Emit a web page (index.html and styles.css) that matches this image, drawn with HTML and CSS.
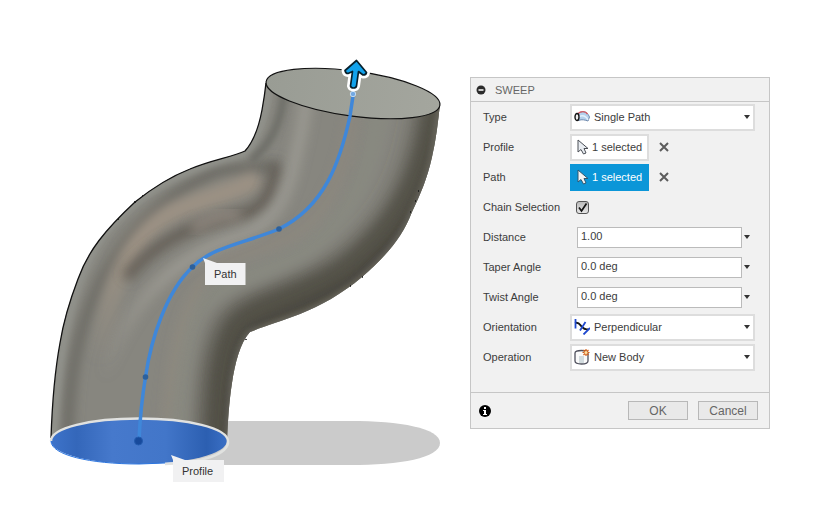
FILE: index.html
```html
<!DOCTYPE html>
<html lang="en">
<head>
<meta charset="utf-8">
<title>Sweep</title>
<link rel="stylesheet" href="styles.css">
</head>
<body>
<main class="workspace">
  <section class="viewport" aria-label="Model view">
    <svg class="scene" viewBox="0 0 470 532" role="img" aria-label="Swept pipe with its profile and path">
      <defs>
        <clipPath id="body-clip">
          <path d="M51 441C52 408 55 370 60 343C64 318 70 300 78 279C88 251 105 230 135 202C150 190 167 178 190 169C211 160 232 157 245 151C254 141 259 126 262 110C264 99 265 92 266 83L353 72L440 104C438 122 436 140 432 157C427 179 421 193 412 212C402 238 386 256 362 277C342 294 320 306 300 314C282 321 262 327 250 332C240 343 235 363 232 383C229 402 228 420 227 441Z"/>
        </clipPath>
        <filter id="blur3" x="-30%" y="-30%" width="160%" height="160%"><feGaussianBlur stdDeviation="3"/></filter>
        <filter id="blur6" x="-40%" y="-40%" width="180%" height="180%"><feGaussianBlur stdDeviation="6"/></filter>
        <filter id="blur12" x="-40%" y="-40%" width="180%" height="180%"><feGaussianBlur stdDeviation="12"/></filter>
        <linearGradient id="profile-fill" x1="50" x2="228" y1="0" y2="0" gradientUnits="userSpaceOnUse">
          <stop offset="0" stop-color="#3e74cb"/><stop offset=".15" stop-color="#3467ba"/><stop offset=".35" stop-color="#4679cc"/>
          <stop offset=".65" stop-color="#4276c9"/><stop offset=".88" stop-color="#2c5fb1"/><stop offset="1" stop-color="#3b70c6"/>
        </linearGradient>
        <linearGradient id="cap-fill" x1="0" x2="1"><stop offset="0" stop-color="#999c94"/><stop offset="1" stop-color="#a4a69e"/></linearGradient>
        <linearGradient id="warm-fade" x1="0" x2="0" y1="250" y2="360" gradientUnits="userSpaceOnUse"><stop offset="0" stop-color="#9d9284"/><stop offset="1" stop-color="#9d9284" stop-opacity="0"/></linearGradient>
        <linearGradient id="cool-fade" x1="0" x2="0" y1="270" y2="380" gradientUnits="userSpaceOnUse"><stop offset="0" stop-color="#a2a099"/><stop offset="1" stop-color="#a2a099" stop-opacity="0"/></linearGradient>
      </defs>

      <path class="shadow" d="M200 421H350C400 421 440 428 440 443S400 465 350 465H180Z"/>

      <g clip-path="url(#body-clip)">
        <rect width="470" height="532" fill="#87867f"/>
        <g class="shade">
          <path d="M448 80C440 180 410 235 355 276C310 306 262 314 246 328C230 347 226 380 224 470" stroke="#4b4841" stroke-width="48" filter="url(#blur12)"/>
          <path d="M436 80C430 165 404 215 346 266C310 294 260 304 237 324C222 350 218 400 216 470" stroke="#55524a" stroke-width="12" opacity=".8" filter="url(#blur6)"/>
          <path d="M381 70C378 170 352 215 307 249C265 276 219 278 197 310C182 340 177 390 176 470" stroke="#888980" stroke-width="18" filter="url(#blur6)"/>
          <path d="M67 470C67 380 76 332 101 281C130 228 167 193 217 172C240 166 256 172 279 164" stroke="#66655f" stroke-width="9" filter="url(#blur6)"/>
          <path d="M53 450C57 350 70 285 103 236C145 183 195 166 245 153C258 143 268 110 270 70" stroke="#949690" stroke-width="6" filter="url(#blur3)"/>
          <path d="M100 370C104 286 130 236 172 212C212 195 237 192 258 178" stroke="url(#warm-fade)" stroke-width="17" filter="url(#blur6)"/>
          <path d="M286 70C284 118 274 142 251 160" stroke="#656660" stroke-width="7" opacity=".8" filter="url(#blur3)"/>
          <path d="M126 278C142 258 160 243 189 230C218 216 251 218 263 202C273 190 272 180 277 166" stroke="#58514a" stroke-width="11" opacity=".8" filter="url(#blur6)"/>
          <path d="M192 229C207 219 230 212 241 217" stroke="#989087" stroke-width="11" opacity=".8" filter="url(#blur6)"/>
          <path d="M100 400C122 290 190 253 235 237C276 225 287 195 295 160C302 130 306 115 308 70" stroke="url(#cool-fade)" stroke-width="11" opacity=".8" filter="url(#blur6)"/>
          <path d="M163 470C169 350 183 300 214 266C245 248 300 246 322 208C343 176 352 140 357 70" stroke="#948c80" stroke-width="10" opacity=".5" filter="url(#blur6)"/>
          <path d="M441 104C438 122 436 140 433 157C428 179 422 193 413 212C403 238 387 256 363 278C343 295 321 307 301 315L251 333C241 344 236 363 233 383L228 450" stroke="#8f8d84" stroke-width="4" opacity=".7" filter="url(#blur3)"/>
        </g>
      </g>
      <path class="edge" d="M51 438C52 408 55 370 60 343C64 318 70 300 78 279C88 251 105 230 135 202C150 190 167 178 190 169C211 160 232 157 245 151C254 141 259 126 262 110C264 99 265 92 266 83"/>
      <path class="tick" d="M118 219h1M134 202h2M142 196h1M418 191h1M415 201h1M410 212h1M362 277h1M350 286h1M246 339v1"/>

      <ellipse cx="353" cy="93.5" rx="87.7" ry="22.5" transform="rotate(7.7 353 93.5)" fill="url(#cap-fill)" stroke="#111" stroke-width="1.2"/>

      <ellipse cx="139" cy="441" rx="88" ry="23" fill="url(#profile-fill)"/>
      <path d="M51 441C51 428 90 418.500 139 418.500S227 428 228 441S202 463 165 464" fill="none" stroke="#e1e2e0" stroke-width="2.500"/>
      <path d="M51 441C51 455 90 464 139 464L165 463" fill="none" stroke="#2b75df" stroke-width="1"/>

      <path class="path-line" d="M139 440C140 419 142 398 145.500 377C151 339 166 292 192.500 267C212 247 245 243 279 229C325 206 340 162 350 116L353 96"/>
      <g class="path-point"><circle cx="145.500" cy="377" r="2.800"/><circle cx="192.500" cy="267" r="2.800"/><circle cx="279" cy="229" r="2.800"/></g>
      <circle cx="138.500" cy="441" r="4" fill="#174a9c" stroke="#245caf"/>
      <circle cx="353" cy="94" r="2.700" fill="#74a9e3" stroke="#c5dbef"/>

      <g stroke-linejoin="round">
        <path d="M356.500 60.500L345 70.500Q345.500 73.500 348 73.500L352.500 71.500L350.500 86Q351 88 353.500 88Q356 88 356.500 86L358.500 71.500L363 75Q366 75 366.500 72.500Z" fill="#fff" stroke="#fff" stroke-width="7"/>
        <path d="M356.500 60.500L345 70.500Q345.500 73.500 348 73.500L352.500 71.500L350.500 86Q351 88 353.500 88Q356 88 356.500 86L358.500 71.500L363 75Q366 75 366.500 72.500Z" fill="#12a2eb" stroke="#07202c" stroke-width="1.700"/>
      </g>

      <g class="callout">
        <path d="M203 258L217 263H245.500V285H205V263Z"/><text x="214" y="278">Path</text>
        <path d="M171 455L185 460H224V482H173V460Z"/><text x="182" y="475">Profile</text>
      </g>
    </svg>
  </section>

  <form class="panel" aria-labelledby="panel-title">
    <header class="panel-header">
      <button type="button" class="icon-button" aria-label="Collapse">
        <svg width="10" height="10" viewBox="0 0 10 10"><circle cx="5" cy="5" r="4.500" fill="#2b2b2b"/><path d="M2.500 5h5" stroke="#fff" stroke-width="1.500"/></svg>
      </button>
      <h1 id="panel-title" class="panel-title">SWEEP</h1>
    </header>

    <div class="rows">
      <label class="row-label" for="type">Type</label>
      <div class="dropdown">
        <select id="type"><option>Single Path</option></select>
        <svg class="option-icon" width="16" height="16" viewBox="0 0 16 16">
          <path d="M4 5C7 1.500 13 1.500 15.500 8L14 12C11 11 8 10 4.500 11.500Z" fill="#b4d0ed" stroke="#6f89ad"/>
          <path d="M4 4.500C7 1.800 11.500 2 13.500 5" fill="none" stroke="#d65b63" stroke-width="1.400"/>
          <path d="M5 7.500C9 6 12 7 14 11" fill="none" stroke="#e4f1fb" stroke-width="1.500"/>
          <ellipse cx="3" cy="8" rx="2" ry="3.500" fill="#eee" stroke="#151515" stroke-width="1.400"/>
        </svg>
        <svg class="caret" width="6" height="4" viewBox="0 0 6 4"><path d="M0 0h6L3 4z"/></svg>
      </div>

      <span class="row-label">Profile</span>
      <div class="selection">
        <button type="button" class="pick">
          <svg width="12" height="16" viewBox="0 0 12 16"><path d="M1 1V13L4 10.500L6.500 15L9 14L7 9.500H11Z" fill="#e9edf2" stroke="#4a4e55"/></svg>
          1 selected
        </button>
        <button type="button" class="icon-button" aria-label="Clear profile"><svg width="10" height="10" viewBox="0 0 10 10"><path d="M1 1l8 8M9 1l-8 8" stroke="#5c5c5c" stroke-width="2"/></svg></button>
      </div>

      <span class="row-label">Path</span>
      <div class="selection">
        <button type="button" class="pick pick-active">
          <svg width="12" height="16" viewBox="0 0 12 16"><path d="M1 1V13L4 10.500L6.500 15L9 14L7 9.500H11Z" fill="#f4f4f4" stroke="#31566e"/></svg>
          1 selected
        </button>
        <button type="button" class="icon-button" aria-label="Clear path"><svg width="10" height="10" viewBox="0 0 10 10"><path d="M1 1l8 8M9 1l-8 8" stroke="#5c5c5c" stroke-width="2"/></svg></button>
      </div>

      <label class="row-label" for="chain">Chain Selection</label>
      <div class="check">
        <input id="chain" type="checkbox" checked>
        <svg class="check-mark" width="13" height="13" viewBox="0 0 13 13"><path d="M3 6.500L5.500 10L10.500 2.500" fill="none" stroke="#151515" stroke-width="1.700"/></svg>
      </div>

      <label class="row-label" for="distance">Distance</label>
      <div class="value">
        <input id="distance" type="text" value="1.00">
        <button type="button" class="icon-button" aria-label="Distance options"><svg class="caret" width="6" height="4" viewBox="0 0 6 4"><path d="M0 0h6L3 4z"/></svg></button>
      </div>

      <label class="row-label" for="taper">Taper Angle</label>
      <div class="value">
        <input id="taper" type="text" value="0.0 deg">
        <button type="button" class="icon-button" aria-label="Taper angle options"><svg class="caret" width="6" height="4" viewBox="0 0 6 4"><path d="M0 0h6L3 4z"/></svg></button>
      </div>

      <label class="row-label" for="twist">Twist Angle</label>
      <div class="value">
        <input id="twist" type="text" value="0.0 deg">
        <button type="button" class="icon-button" aria-label="Twist angle options"><svg class="caret" width="6" height="4" viewBox="0 0 6 4"><path d="M0 0h6L3 4z"/></svg></button>
      </div>

      <label class="row-label" for="orientation">Orientation</label>
      <div class="dropdown">
        <select id="orientation"><option>Perpendicular</option></select>
        <svg class="option-icon" width="16" height="16" viewBox="0 0 16 16">
          <path d="M1 4C5 2.500 6 6 8 8S11.500 11 14.500 10" fill="none" stroke="#151515" stroke-width="1.800"/>
          <path d="M1.500 0V9.500M11.500 3L6 11.500M9.500 15.500L16 9" fill="none" stroke="#1f49cf" stroke-width="1.800"/>
        </svg>
        <svg class="caret" width="6" height="4" viewBox="0 0 6 4"><path d="M0 0h6L3 4z"/></svg>
      </div>

      <label class="row-label" for="operation">Operation</label>
      <div class="dropdown">
        <select id="operation"><option>New Body</option></select>
        <svg class="option-icon" width="16" height="16" viewBox="0 0 16 16">
          <path d="M1 4C1 2 3 1.500 7.500 1.500S14 2 14 4V12C14 14 12 15 7.500 15S1 14 1 12Z" fill="#fafafa" stroke="#50515e" stroke-width="1.300"/>
          <path d="M5 7h5v7H5z" fill="#d3dcdf"/>
          <path d="M12 0V7M8.500 3.500H15.500M9.500 1L14.500 6M14.500 1L9.500 6" stroke="#d45f18" stroke-width="1.200"/>
          <circle cx="12" cy="3.500" r="1.500" fill="#ffe0a0"/>
        </svg>
        <svg class="caret" width="6" height="4" viewBox="0 0 6 4"><path d="M0 0h6L3 4z"/></svg>
      </div>
    </div>

    <footer class="panel-footer">
      <button type="button" class="icon-button" aria-label="Information">
        <svg width="12" height="12" viewBox="0 0 12 12"><circle cx="6" cy="6" r="6"/><path d="M5 2h2v2H5zM4 5h3v4h1v1H4V9h1V6H4z" fill="#fff"/></svg>
      </button>
      <div class="actions">
        <button type="submit" class="action">OK</button>
        <button type="button" class="action">Cancel</button>
      </div>
    </footer>
  </form>
</main>
</body>
</html>
```
FILE: styles.css
```css
* { box-sizing: border-box; }

body {
  margin: 0;
  background: #fff;
  color: #3c3c3c;
  font: 11px/14px "Liberation Sans", Arial, sans-serif;
}

button, input, select { font: inherit; color: inherit; margin: 0; }
svg { display: block; flex: none; }

.workspace { display: flex; align-items: flex-start; padding-right: 53px; }
.viewport { flex: 1; min-width: 0; }

.scene { width: 100%; height: auto; }
.shadow { fill: #cbcbcb; }
.shade path { fill: none; }
.edge { fill: none; stroke: #111; stroke-width: 1.3; }
.tick { fill: none; stroke: #111; stroke-width: 1.5; }
.path-line { fill: none; stroke: #3f87d9; stroke-width: 3.5; }
.path-point { fill: #2c609c; }
.callout path { fill: #f1f1f2; }
.callout text { fill: #333; font-size: 11px; }

.panel {
  flex: 0 0 300px;
  margin-top: 77px;
  background: #f1f1f1;
  border: 1px solid #c6c6c6;
}

.panel-header {
  display: flex;
  align-items: center;
  gap: 9px;
  height: 24px;
  padding-left: 5px;
  border-bottom: 1px solid #c6c6c6;
}
.panel-title { margin: 0; color: #666; font-size: 11px; font-weight: 400; }

.icon-button {
  display: flex;
  align-items: center;
  padding: 0;
  border: 0;
  background: none;
}

.rows {
  display: grid;
  grid-template-columns: 87px minmax(0, 1fr);
  grid-auto-rows: 30px;
  align-items: center;
  padding: 0 14px 20px 12px;
}
.row-label { white-space: nowrap; }

.dropdown { display: grid; align-items: center; }
.dropdown > * { grid-area: 1 / 1; }
.dropdown select {
  appearance: none;
  width: 100%;
  height: 27px;
  padding: 0 20px 0 22px;
  border: 2px solid #ddd;
  border-radius: 0;
  background: #fff;
}
.option-icon { margin-left: 4px; pointer-events: none; }
.caret { fill: #333; pointer-events: none; }
.dropdown .caret { justify-self: end; margin-right: 5px; }

.selection { display: flex; align-items: center; gap: 10px; }
.pick {
  display: flex;
  align-items: center;
  gap: 3px;
  width: 79px;
  height: 27px;
  padding: 0 0 0 5px;
  border: 2px solid #ddd;
  background: #fff;
  white-space: nowrap;
}
.pick-active { border-color: #0b96d8; background: #0b96d8; color: #fff; }

.check { display: grid; align-items: center; padding-left: 6px; }
.check > * { grid-area: 1 / 1; }
.check input {
  appearance: none;
  width: 13px;
  height: 13px;
  border: 1px solid #555;
  border-radius: 3px;
  background: linear-gradient(#bbb, #e6e6e6);
}
.check-mark { visibility: hidden; pointer-events: none; }
.check input:checked + .check-mark { visibility: visible; }

.value { display: flex; gap: 2px; padding: 0 5px 0 7px; }
.value input {
  flex: 1;
  min-width: 0;
  height: 21px;
  padding: 0 3px 2px;
  border: 1px solid #bbb;
  background: #fff;
}

.panel-footer {
  display: flex;
  align-items: center;
  justify-content: space-between;
  height: 36px;
  padding: 0 11px 0 8px;
  border-top: 1px solid #c6c6c6;
}
.actions { display: flex; gap: 10px; }
.action {
  width: 60px;
  height: 19px;
  padding: 0;
  border: 1px solid #b8b8b8;
  background: #e9e9e9;
  color: #666;
  font-size: 12px;
}
```
